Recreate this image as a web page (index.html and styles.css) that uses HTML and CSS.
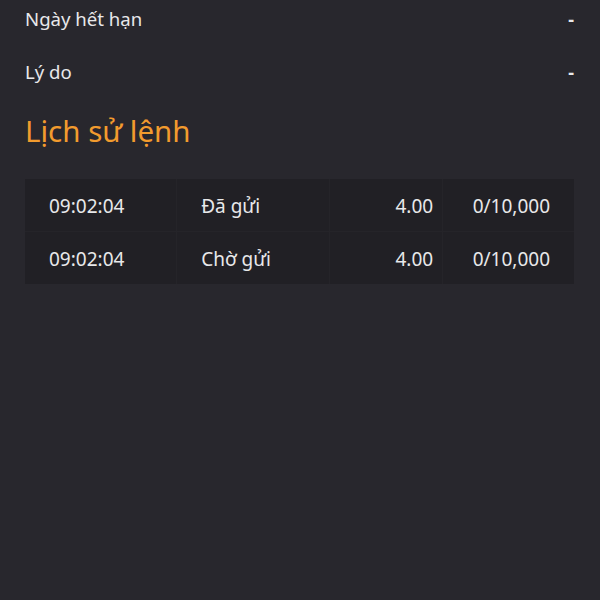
FILE: index.html
```html
<!DOCTYPE html>
<html lang="vi">
<head>
  <meta charset="UTF-8">
  <meta name="viewport" content="width=device-width, initial-scale=1.0">
  <title>Chi tiết lệnh</title>
  <link rel="stylesheet" href="styles.css">
</head>
<body>
  <div class="info">
    <div class="info-row">
      <span class="label">Ngày hết hạn</span>
      <span class="value">-</span>
    </div>
    <div class="info-row">
      <span class="label">Lý do</span>
      <span class="value">-</span>
    </div>
  </div>

  <h2 class="section-title">Lịch sử lệnh</h2>

  <table class="history">
    <tr>
      <td class="col-time">09:02:04</td>
      <td class="col-status">Đã gửi</td>
      <td class="col-price">4.00</td>
      <td class="col-qty">0/10,000</td>
    </tr>
    <tr>
      <td class="col-time">09:02:04</td>
      <td class="col-status">Chờ gửi</td>
      <td class="col-price">4.00</td>
      <td class="col-qty">0/10,000</td>
    </tr>
  </table>
</body>
</html>
```

FILE: styles.css
```css
body {
  margin: 0;
  padding: 0 25px;
  background-color: #28272d;
  color: #e8e8ea;
  font-family: "Noto Sans", "Open Sans", sans-serif;
}

.info {
  display: flex;
  flex-direction: column;
}

.info-row {
  display: flex;
  justify-content: space-between;
  align-items: center;
  height: 53px;
  margin-top: -8px;
  margin-bottom: 8px;
  font-size: 18.6px;
}

.info-row .value {
  font-size: 18px;
  font-weight: bold;
  padding-right: 1px;
}

.section-title {
  margin: 0;
  padding: 5px 0 0;
  color: #f29b2e;
  font-size: 29.5px;
  font-weight: normal;
  line-height: 40px;
}

.history {
  width: 549px;
  margin-top: 28px;
  border-collapse: collapse;
  background-color: #212025;
  font-size: 19px;
}

.history td {
  height: 51px;
  padding: 1px 24px 0;
  border: 1px solid #252429;
  white-space: nowrap;
}

.history tr:first-child td {
  border-top: none;
}

.history tr:last-child td {
  border-bottom: none;
}

.history td:first-child {
  border-left: none;
}

.history td:last-child {
  border-right: none;
}

.col-time {
  width: 104px;
}

.col-status {
  width: 105px;
}

.col-price {
  width: 80px;
  text-align: right;
  padding-right: 9px !important;
}

.col-qty {
  width: 83px;
  text-align: right;
}
```
